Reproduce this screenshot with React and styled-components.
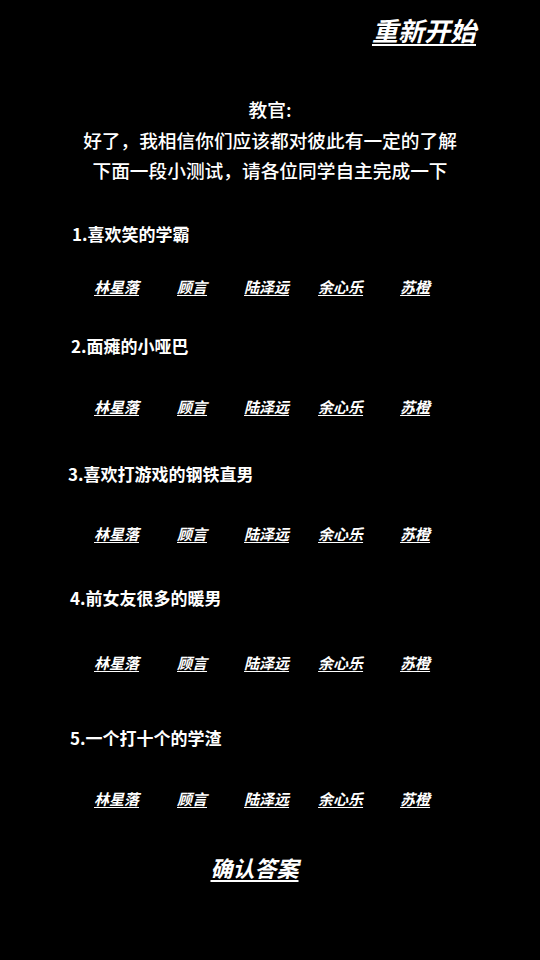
import React from "react";
import styled, { createGlobalStyle } from "styled-components";

const Global = createGlobalStyle`
  html, body { margin: 0; padding: 0; background: #000; }
  body { font-family: "Noto Sans CJK SC", "Noto Sans", sans-serif; color: #fff; }
`;

const Page = styled.div`
  width: 540px;
  min-height: 960px;
  background: #000;
  display: flex;
  flex-direction: column;
`;

const Header = styled.div`
  display: flex;
  justify-content: flex-end;
  padding: 14px 64px 0 0;
`;

const Restart = styled.a`
  font-size: 26px;
  line-height: 32px;
  font-weight: 700;
  font-style: italic;
  color: #fff;
  text-decoration: underline;
  text-decoration-thickness: 2px;
  text-underline-offset: 3px;
  cursor: pointer;
`;

const Intro = styled.div`
  margin-top: 48px;
  text-align: center;
  font-size: 18.7px;
  line-height: 30.5px;
  font-weight: 500;
`;

const Question = styled.div`
  margin-top: ${(p) => p.$top}px;
  padding-left: ${(p) => p.$indent}px;
  font-size: 17px;
  line-height: 24px;
  font-weight: 700;
`;

const NameRow = styled.div`
  margin-top: ${(p) => p.$top}px;
  display: flex;
  padding-left: 94px;
`;

const Name = styled.a`
  margin-left: ${(p) => p.$gap}px;
  font-size: 15px;
  line-height: 22px;
  font-style: italic;
  font-weight: 700;
  color: #fff;
  text-decoration: underline;
  text-underline-offset: 2px;
  cursor: pointer;
`;

const Footer = styled.div`
  margin-top: 43px;
  display: flex;
  justify-content: center;
  padding-right: 31px;
`;

const Confirm = styled.a`
  font-size: 22px;
  line-height: 28px;
  font-weight: 700;
  font-style: italic;
  color: #fff;
  text-decoration: underline;
  text-decoration-thickness: 2px;
  text-underline-offset: 3px;
  cursor: pointer;
`;

const names = [
  { n: "林星落", g: 0 },
  { n: "顾言", g: 38 },
  { n: "陆泽远", g: 37 },
  { n: "余心乐", g: 29 },
  { n: "苏橙", g: 37 },
];

const questions = [
  { t: "1.喜欢笑的学霸", indent: 72, qTop: 36, nTop: 30 },
  { t: "2.面瘫的小哑巴", indent: 71, qTop: 36, nTop: 38 },
  { t: "3.喜欢打游戏的钢铁直男", indent: 68, qTop: 44, nTop: 37 },
  { t: "4.前女友很多的暖男", indent: 70, qTop: 41, nTop: 42 },
  { t: "5.一个打十个的学渣", indent: 70, qTop: 52, nTop: 38 },
];

export default function App() {
  return (
    <Page>
      <Global />
      <Header>
        <Restart>重新开始</Restart>
      </Header>
      <Intro>
        <div>教官:</div>
        <div>好了，我相信你们应该都对彼此有一定的了解</div>
        <div>下面一段小测试，请各位同学自主完成一下</div>
      </Intro>
      {questions.map((q) => (
        <React.Fragment key={q.t}>
          <Question $top={q.qTop} $indent={q.indent}>
            {q.t}
          </Question>
          <NameRow $top={q.nTop}>
            {names.map((x) => (
              <Name key={x.n} $gap={x.g}>
                {x.n}
              </Name>
            ))}
          </NameRow>
        </React.Fragment>
      ))}
      <Footer>
        <Confirm>确认答案</Confirm>
      </Footer>
    </Page>
  );
}
